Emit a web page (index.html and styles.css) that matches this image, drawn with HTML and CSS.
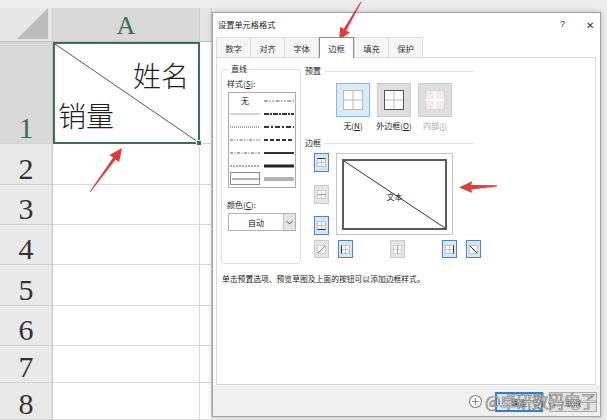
FILE: index.html
```html
<!DOCTYPE html>
<html lang="zh-CN">
<head>
<meta charset="utf-8">
<title>设置单元格格式</title>
<link rel="stylesheet" href="styles.css">
</head>
<body>
<div class="page">
  <div class="sheet">
    <div class="hd corner"><svg width="32" height="31" viewBox="0 0 32 31"><path d="M0 31 L31 0 L31 31 Z" fill="#bcbcbc"/></svg></div>
    <div class="hd colhd sel">A</div>
    <div class="hd colhd"></div>

    <div class="rowhd sel">1</div>
    <div class="cell a1">
      <svg class="diag" viewBox="0 0 100 100" preserveAspectRatio="none"><line x1="0" y1="0" x2="100" y2="100" stroke="#555" stroke-width="1" vector-effect="non-scaling-stroke"/></svg>
      <span class="t-top">姓名</span>
      <span class="t-bot">销量</span>
      <span class="handle"></span>
    </div>
    <div class="cell"></div>

    <div class="rowhd">2</div><div class="cell"></div><div class="cell"></div>
    <div class="rowhd">3</div><div class="cell"></div><div class="cell"></div>
    <div class="rowhd">4</div><div class="cell"></div><div class="cell"></div>
    <div class="rowhd">5</div><div class="cell"></div><div class="cell"></div>
    <div class="rowhd">6</div><div class="cell"></div><div class="cell"></div>
    <div class="rowhd">7</div><div class="cell"></div><div class="cell"></div>
    <div class="rowhd">8</div><div class="cell"></div><div class="cell"></div>
  </div>

  <div class="dialog">
    <div class="titlebar">
      <span class="title">设置单元格格式</span>
      <span class="tctrls"><span class="q">?</span><span class="x">✕</span></span>
    </div>
    <div class="tabs">
      <span class="tab">数字</span>
      <span class="tab">对齐</span>
      <span class="tab">字体</span>
      <span class="tab active">边框</span>
      <span class="tab">填充</span>
      <span class="tab">保护</span>
    </div>
    <div class="panel">
      <fieldset class="group">
        <legend>直线</legend>
        <div class="lbl">样式(<u>S</u>):</div>
        <div class="stylelist">
          <div class="si none">无</div>
          <div class="si"><svg viewBox="0 0 30 4"><line x1="0" y1="2" x2="30" y2="2" stroke="#5a5a5a" stroke-width="1.2" stroke-dasharray="4 1.5 1.5 1.5 1.5 1.5"/></svg></div>
          <div class="si"><svg viewBox="0 0 30 4"><line x1="0" y1="2" x2="30" y2="2" stroke="#a9a9a9" stroke-width="1"/></svg></div>
          <div class="si"><svg viewBox="0 0 30 4"><line x1="0" y1="2" x2="30" y2="2" stroke="#333" stroke-width="2" stroke-dasharray="5 1 2 1"/></svg></div>
          <div class="si"><svg viewBox="0 0 30 4"><line x1="0" y1="2" x2="30" y2="2" stroke="#555" stroke-width="1" stroke-dasharray="1 1"/></svg></div>
          <div class="si"><svg viewBox="0 0 30 4"><line x1="0" y1="2" x2="30" y2="2" stroke="#333" stroke-width="2" stroke-dasharray="5 2 2 2"/></svg></div>
          <div class="si"><svg viewBox="0 0 30 4"><line x1="0" y1="2" x2="30" y2="2" stroke="#555" stroke-width="1" stroke-dasharray="3 1.5 1 1.5 1 1.5"/></svg></div>
          <div class="si"><svg viewBox="0 0 30 4"><line x1="0" y1="2" x2="30" y2="2" stroke="#333" stroke-width="2" stroke-dasharray="4 2"/></svg></div>
          <div class="si"><svg viewBox="0 0 30 4"><line x1="0" y1="2" x2="30" y2="2" stroke="#555" stroke-width="1" stroke-dasharray="3 1.5 1 1.5"/></svg></div>
          <div class="si"><svg viewBox="0 0 30 4"><line x1="0" y1="2" x2="30" y2="2" stroke="#333" stroke-width="2"/></svg></div>
          <div class="si"><svg viewBox="0 0 30 4"><line x1="0" y1="2" x2="30" y2="2" stroke="#555" stroke-width="1" stroke-dasharray="2 1"/></svg></div>
          <div class="si"><svg viewBox="0 0 30 4"><line x1="0" y1="2" x2="30" y2="2" stroke="#222" stroke-width="3"/></svg></div>
          <div class="si picked"><svg viewBox="0 0 30 4"><line x1="0" y1="2" x2="30" y2="2" stroke="#555" stroke-width="1"/></svg></div>
          <div class="si"><svg viewBox="0 0 30 4"><line x1="0" y1="1" x2="30" y2="1" stroke="#666" stroke-width="1"/><line x1="0" y1="3" x2="30" y2="3" stroke="#666" stroke-width="1"/></svg></div>
        </div>
        <div class="lbl lbl2">颜色(<u>C</u>):</div>
        <div class="combo">
          <span class="cval">自动</span>
          <span class="cbtn"><svg width="7" height="5" viewBox="0 0 7 5"><path d="M.5 1 L3.5 4 L6.5 1" fill="none" stroke="#555" stroke-width="1"/></svg></span>
        </div>
      </fieldset>

      <div class="right">
        <div class="sec"><span>预置</span><i></i></div>
        <div class="presets">
          <div class="preset">
            <span class="pbtn on"><svg width="20" height="20" viewBox="0 0 20 20"><rect x=".5" y=".5" width="19" height="19" fill="#fff" stroke="#b9b9b9"/><path d="M10 .5v19M.5 10h19" stroke="#b9b9b9"/></svg></span>
            <span class="plbl">无(<u>N</u>)</span>
          </div>
          <div class="preset">
            <span class="pbtn"><svg width="20" height="20" viewBox="0 0 20 20"><rect x=".5" y=".5" width="19" height="19" fill="#fff" stroke="#555"/><path d="M10 1v18M1 10h18" stroke="#bcbcbc"/></svg></span>
            <span class="plbl">外边框(<u>O</u>)</span>
          </div>
          <div class="preset">
            <span class="pbtn"><svg width="20" height="20" viewBox="0 0 20 20"><rect x=".5" y=".5" width="19" height="19" fill="#f4e9ef" stroke="#d6d6d6"/><path d="M10 .5v19M.5 10h19" stroke="#ffffff" stroke-width="1.5"/></svg></span>
            <span class="plbl dim">内部(<u>I</u>)</span>
          </div>
        </div>

        <div class="sec sec2"><span>边框</span><i></i></div>
        <div class="editor">
          <div class="lcol">
            <span class="bb on"><svg viewBox="0 0 9 9"><rect x=".5" y=".5" width="8" height="8" fill="#fff" stroke="#c2c2c2"/><path d="M4.5 .5v8M.5 4.5h8" stroke="#c2c2c2"/><path d="M.5 .5h8" stroke="#333"/></svg></span>
            <span class="bb"><svg viewBox="0 0 9 9"><rect x=".5" y=".5" width="8" height="8" fill="#fff" stroke="#cfcfcf"/><path d="M4.5 .5v8" stroke="#cfcfcf"/><path d="M.5 4.5h8" stroke="#999"/></svg></span>
            <span class="bb on"><svg viewBox="0 0 9 9"><rect x=".5" y=".5" width="8" height="8" fill="#fff" stroke="#c2c2c2"/><path d="M4.5 .5v8M.5 4.5h8" stroke="#c2c2c2"/><path d="M.5 8.5h8" stroke="#333"/></svg></span>
          </div>
          <div class="preview">
            <div class="pinner">
              <svg class="diag" viewBox="0 0 100 100" preserveAspectRatio="none"><line x1="0" y1="0" x2="100" y2="100" stroke="#333" stroke-width="1" vector-effect="non-scaling-stroke"/></svg>
              <span class="ptext">文本</span>
            </div>
          </div>
          <div class="brow">
            <span class="bb"><svg viewBox="0 0 9 9"><rect x=".5" y=".5" width="8" height="8" fill="#fff" stroke="#cfcfcf"/><path d="M1 8 L8 1" stroke="#777"/></svg></span>
            <span class="bb on"><svg viewBox="0 0 9 9"><rect x=".5" y=".5" width="8" height="8" fill="#fff" stroke="#c2c2c2"/><path d="M4.5 .5v8M.5 4.5h8" stroke="#c2c2c2"/><path d="M.5 .5v8" stroke="#333"/></svg></span>
            <span class="bb"><svg viewBox="0 0 9 9"><rect x=".5" y=".5" width="8" height="8" fill="#fff" stroke="#cfcfcf"/><path d="M.5 4.5h8" stroke="#cfcfcf"/><path d="M4.5 .5v8" stroke="#999"/></svg></span>
            <span class="bb on"><svg viewBox="0 0 9 9"><rect x=".5" y=".5" width="8" height="8" fill="#fff" stroke="#c2c2c2"/><path d="M4.5 .5v8M.5 4.5h8" stroke="#c2c2c2"/><path d="M8.5 .5v8" stroke="#333"/></svg></span>
            <span class="bb on last"><svg viewBox="0 0 9 9"><rect x=".5" y=".5" width="8" height="8" fill="#fff" stroke="#c2c2c2"/><path d="M1 1 L8 8" stroke="#333"/></svg></span>
          </div>
        </div>
      </div>

      <p class="hint">单击预置选项、预览草图及上面的按钮可以添加边框样式。</p>
    </div>
    <div class="footer">
      <span class="btn primary">确定</span>
      <span class="btn">取消</span>
    </div>
  </div>

  <div class="watermark">
    <svg width="15" height="15" viewBox="0 0 15 15"><circle cx="7.5" cy="7.5" r="6" fill="#fff" stroke="#8a8a8a" stroke-width="1.2"/><path d="M4 7.5h7M7.5 4v7" stroke="#8a8a8a" stroke-width="1.2"/></svg>
    <span>@卓研数码电子</span>
  </div>

  <svg class="arrows" width="607" height="420" viewBox="0 0 607 420">
    <polygon points="89.6,191.7 113.1,157.6 109.5,155 122,148 119.2,162 115.6,159.4 90.4,192.3" fill="#e23b3f"/>
    <polygon points="360.6,1.75 343.7,28.8 340.2,26.8 339,40 349.8,32.4 346.3,30.4 361.4,2.25" fill="#e23b3f"/>
    <polygon points="497,185.2 471,185 472.5,181 459,187.5 472.5,193 471,189.6 497,186.6" fill="#e23b3f"/>
  </svg>
</div>
</body>
</html>
```

FILE: styles.css
```css
* { box-sizing: border-box; }
html, body { margin: 0; padding: 0; }
body {
  width: 607px;
  height: 420px;
  overflow: hidden;
  font-family: "Noto Sans CJK SC", "Noto Sans", sans-serif;
  color: #222;
}
.page {
  position: relative;
  display: flex;
  align-items: flex-start;
  width: 607px;
  height: 420px;
  overflow: hidden;
  background: #ececec;
}

/* ---------- spreadsheet ---------- */
.sheet {
  flex: none;
  width: 212px;
  margin-top: 8px;
  display: grid;
  grid-template-columns: 53px 147px 12px;
  grid-template-rows: 34px 102px 41px 40px 40px 41px 40px 37px 37px;
  background: #fff;
}
.hd {
  background: #e6e6e6;
  border-right: 1px solid #cdcdcd;
  border-bottom: 1px solid #bfbfbf;
}
.corner {
  display: flex;
  justify-content: flex-end;
  align-items: flex-end;
  padding: 0 3px 2px 0;
}
.corner svg { display: block; }
.colhd {
  display: flex;
  justify-content: center;
  align-items: center;
  padding-top: 3px;
  font-family: "Liberation Serif", serif;
  font-size: 26px;
  line-height: 1;
  color: #333;
}
.colhd.sel { background: #d8d8d8; color: #3b6e55; }
.rowhd {
  background: #e9e9e9;
  border-right: 1px solid #c6c6c6;
  border-bottom: 1px solid #d2d2d2;
  display: flex;
  justify-content: center;
  align-items: flex-end;
  font-family: "Liberation Serif", serif;
  font-size: 30px;
  line-height: 30px;
  color: #333;
}
.rowhd.sel { background: #d8d8d8; color: #3b6e55; }
.cell {
  border-right: 1px solid #d9d9d9;
  border-bottom: 1px solid #d9d9d9;
}
.a1 {
  position: relative;
  border: 2px solid #3a6f52;
  display: flex;
  flex-direction: column;
  justify-content: space-between;
  padding: 16px 9px 12px 3px;
  font-size: 28px;
  line-height: 30px;
  font-weight: 300;
  color: #1e1e1e;
}
.a1 .diag {
  position: absolute;
  left: 0; top: 0;
  width: 100%; height: 100%;
}
.t-top { align-self: flex-end; position: relative; }
.t-bot { align-self: flex-start; position: relative; }
.handle {
  position: absolute;
  right: -4px; bottom: -4px;
  width: 6px; height: 6px;
  background: #3a6f52;
  border: 1px solid #fff;
}

/* ---------- dialog ---------- */
.dialog {
  flex: none;
  width: 389px;
  height: 405px;
  margin-top: 12px;
  border: 1px solid #a3a3a3;
  background: #fff;
  box-shadow: 0 0 5px rgba(0,0,0,.22);
  display: flex;
  flex-direction: column;
  font-size: 8px;
  color: #222;
}
.titlebar {
  height: 22px;
  flex: none;
  display: flex;
  align-items: center;
  justify-content: space-between;
  padding: 0 6px 0 5px;
}
.title { font-size: 8.2px; }
.tctrls { display: flex; gap: 21px; align-items: center; color: #333; }
.q { font-family: "Liberation Sans", sans-serif; font-size: 9px; }
.x { font-size: 10px; }

.tabs {
  flex: none;
  display: flex;
  margin-top: 2px;
  padding-left: 3px;
  height: 20px;
  position: relative;
  z-index: 1;
}
.tab {
  width: 35px;
  display: flex;
  align-items: center;
  justify-content: center;
  font-size: 8.4px;
  background: #f6f6f6;
  border: 1px solid #dcdcdc;
  border-bottom: none;
  margin-right: -1px;
  color: #333;
}
.tab.active {
  background: #fff;
  border-color: #8c8c8c;
  height: 21px;
  margin-bottom: -1px;
  position: relative;
  z-index: 2;
  margin-right: 0;
  margin-left: 1px;
}
.panel {
  flex: none;
  height: 328px;
  margin: 0 4px 0 3px;
  border: 1px solid #d9d9d9;
  background: #fff;
  display: grid;
  grid-template-columns: 80px 170px;
  grid-template-rows: auto auto;
  column-gap: 4px;
  align-content: start;
  padding: 6px 0 0 4px;
}

.group {
  margin: 0;
  height: 200px;
  border: 1px solid #dedede;
  border-radius: 3px;
  padding: 5px 4px 0 6px;
  min-width: 0;
}
.group legend {
  padding: 0 2px;
  margin-left: 1px;
  font-size: 8px;
  line-height: 10px;
}
.lbl {
  font-size: 8px;
  line-height: 10px;
  margin-left: -1px;
}
.lbl u, .plbl u { text-decoration: underline; }
.stylelist {
  margin-top: 3px;
  width: 68px;
  height: 96px;
  border: 1px solid #adadad;
  display: grid;
  grid-template-columns: 30px 30px;
  grid-template-rows: repeat(7, 1fr);
  column-gap: 4px;
  padding: 2px 2px;
  justify-content: center;
}
.si {
  display: flex;
  align-items: center;
  justify-content: center;
}
.si svg { width: 30px; height: 4px; display: block; }
.si.none { font-size: 8px; line-height: 1; }
.si.picked { outline: 1px solid #8c8c8c; outline-offset: -1px; padding: 0 1px; }
.si.picked svg { width: 27px; }
.lbl2 { margin-top: 12px; }
.combo {
  margin-top: 3px;
  width: 68px;
  height: 18px;
  border: 1px solid #b3b3b3;
  display: flex;
  background: #fdfdfd;
}
.cval {
  flex: 1;
  display: flex;
  align-items: center;
  justify-content: center;
  font-size: 8px;
}
.cbtn {
  width: 12px;
  background: #e4e4e4;
  border-left: 1px solid #c4c4c4;
  display: flex;
  align-items: center;
  justify-content: center;
}

.right { display: flex; flex-direction: column; padding-top: 2px; }
.sec {
  display: flex;
  align-items: center;
  gap: 4px;
  font-size: 8px;
  line-height: 10px;
}
.sec i { flex: 1; height: 1px; background: #e2e2e2; margin-right: 1px; }
.presets {
  margin-top: 7px;
  margin-left: 31px;
  display: flex;
  gap: 7px;
}
.preset {
  width: 34px;
  display: flex;
  flex-direction: column;
  align-items: center;
}
.pbtn {
  width: 34px;
  height: 34px;
  background: #dedede;
  border: 1px solid #cbcbcb;
  display: flex;
  align-items: center;
  justify-content: center;
}
.pbtn.on { background: #d9ebf8; border-color: #8ab7dc; }
.plbl {
  margin-top: 4px;
  font-size: 8px;
  line-height: 10px;
  white-space: nowrap;
}
.plbl.dim { color: #a5a5a5; }
.sec2 { margin-top: 7px; }
.editor {
  margin-top: 5px;
  margin-left: 9px;
  display: grid;
  grid-template-columns: 15px 117px 21px;
  grid-template-rows: 82px 18px;
  column-gap: 7px;
  row-gap: 5px;
}
.lcol {
  display: flex;
  flex-direction: column;
  justify-content: space-between;
}
.bb {
  width: 15px;
  height: 19px;
  background: #e4e4e4;
  border: 1px solid #cccccc;
  display: flex;
  align-items: center;
  justify-content: center;
}
.bb svg { width: 9px; height: 9px; display: block; }
.bb.on { background: #d3e7f7; border-color: #4f86bb; }
.preview {
  border: 1px solid #c6c6c6;
  padding: 5px 5px 4px 5px;
}
.pinner {
  position: relative;
  height: 100%;
  border: 2px solid #5b5b5b;
  display: flex;
  align-items: center;
  justify-content: center;
}
.pinner .diag {
  position: absolute;
  left: 0; top: 0;
  width: 100%; height: 100%;
}
.ptext {
  position: relative;
  font-size: 8px;
  background: transparent;
  margin-top: 4px;
}
.brow {
  grid-column: 1 / 4;
  display: flex;
  justify-content: space-between;
}
.brow .bb:nth-child(2) { margin-left: 7px; }
.brow .bb:nth-child(3) { margin-left: 35px; }
.brow .bb:nth-child(4) { margin-left: 35px; }
.brow .bb.last { margin-left: 7px; }
.brow .bb { height: 18px; }

.hint {
  grid-column: 1 / 3;
  margin: 10px 0 0 1px;
  font-size: 7.8px;
  line-height: 10px;
  color: #222;
}

.footer {
  flex: 1;
  background: #f0f0f0;
  display: flex;
  justify-content: flex-end;
  align-items: flex-start;
  gap: 6px;
  padding: 7px 3px 0 0;
}
.btn {
  width: 48px;
  height: 20px;
  background: #e1e1e1;
  border: 1px solid #adadad;
  display: flex;
  align-items: center;
  justify-content: center;
  font-size: 8px;
}
.btn.primary { border: 2px solid #2f7fca; }

.watermark {
  position: absolute;
  left: 468px;
  top: 391px;
  display: flex;
  align-items: center;
  gap: 2px;
  font-size: 16.5px;
  line-height: 20px;
  color: rgba(255,255,255,.85);
  -webkit-text-stroke: 0.7px #7d7d7d;
  letter-spacing: -0.5px;
}
.arrows {
  position: absolute;
  left: 0; top: 0;
  pointer-events: none;
}
```
